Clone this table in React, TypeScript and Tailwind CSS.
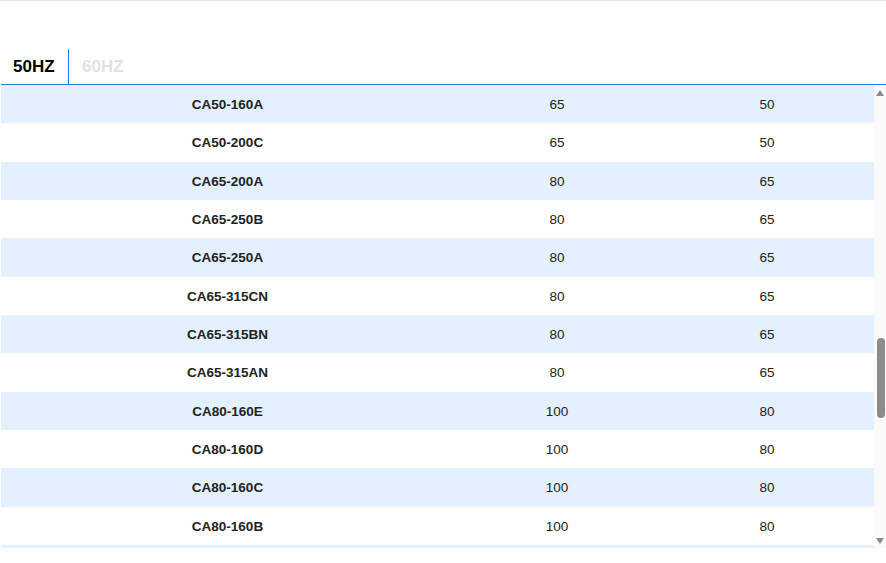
import React from "react";

const rows: [string, string, string][] = [
  ["CA50-160A", "65", "50"],
  ["CA50-200C", "65", "50"],
  ["CA65-200A", "80", "65"],
  ["CA65-250B", "80", "65"],
  ["CA65-250A", "80", "65"],
  ["CA65-315CN", "80", "65"],
  ["CA65-315BN", "80", "65"],
  ["CA65-315AN", "80", "65"],
  ["CA80-160E", "100", "80"],
  ["CA80-160D", "100", "80"],
  ["CA80-160C", "100", "80"],
  ["CA80-160B", "100", "80"],
];

export default function App() {
  return (
    <div
      className="w-[886px] h-[563px] bg-white overflow-hidden text-[#222]"
      style={{ fontFamily: '"Liberation Sans", Arial, sans-serif' }}
    >
      <div className="h-px bg-[#e6e6e6]" />
      <div className="h-[48px]" />
      <div className="flex h-[35px] ml-px">
        <div className="w-[67px] flex items-center pl-[12px] pt-[1px] text-[17px] font-bold text-black">
          50HZ
        </div>
        <div className="w-px bg-[#1a80f0]" />
        <div className="flex items-center pl-[13px] pt-[1px] text-[17px] font-bold text-[#dfe1e5]">
          60HZ
        </div>
      </div>
      <div className="h-px bg-[#1a80f0] ml-px" />
      <div className="flex h-[463px] ml-px">
        <div className="w-[873px] overflow-hidden">
          {rows.map((r, i) => (
            <div
              key={r[0]}
              className={`flex h-[38.33px] items-center pt-[2px] text-[13.5px] ${
                i % 2 === 0 ? "bg-[#e4f0fe]" : "bg-white"
              }`}
            >
              <div className="w-[453px] text-center font-bold">{r[0]}</div>
              <div className="w-[206px] text-center">{r[1]}</div>
              <div className="w-[214px] text-center">{r[2]}</div>
            </div>
          ))}
          <div className="h-[3px] bg-[#e4f0fe]" />
        </div>
        <div className="w-[12px] bg-[#fafafa] flex flex-col items-center">
          <div className="h-[5px]" />
          <svg width="8" height="6" viewBox="0 0 8 6">
            <polygon points="4,0 8,6 0,6" fill="#8c8c8c" />
          </svg>
          <div className="h-[242px]" />
          <div className="w-[8px] h-[80px] rounded-full bg-[#8c8c8c] ml-[2px]" />
          <div className="flex-1" />
          <svg width="8" height="6" viewBox="0 0 8 6">
            <polygon points="0,0 8,0 4,6" fill="#8c8c8c" />
          </svg>
          <div className="h-[4px]" />
        </div>
      </div>
    </div>
  );
}
